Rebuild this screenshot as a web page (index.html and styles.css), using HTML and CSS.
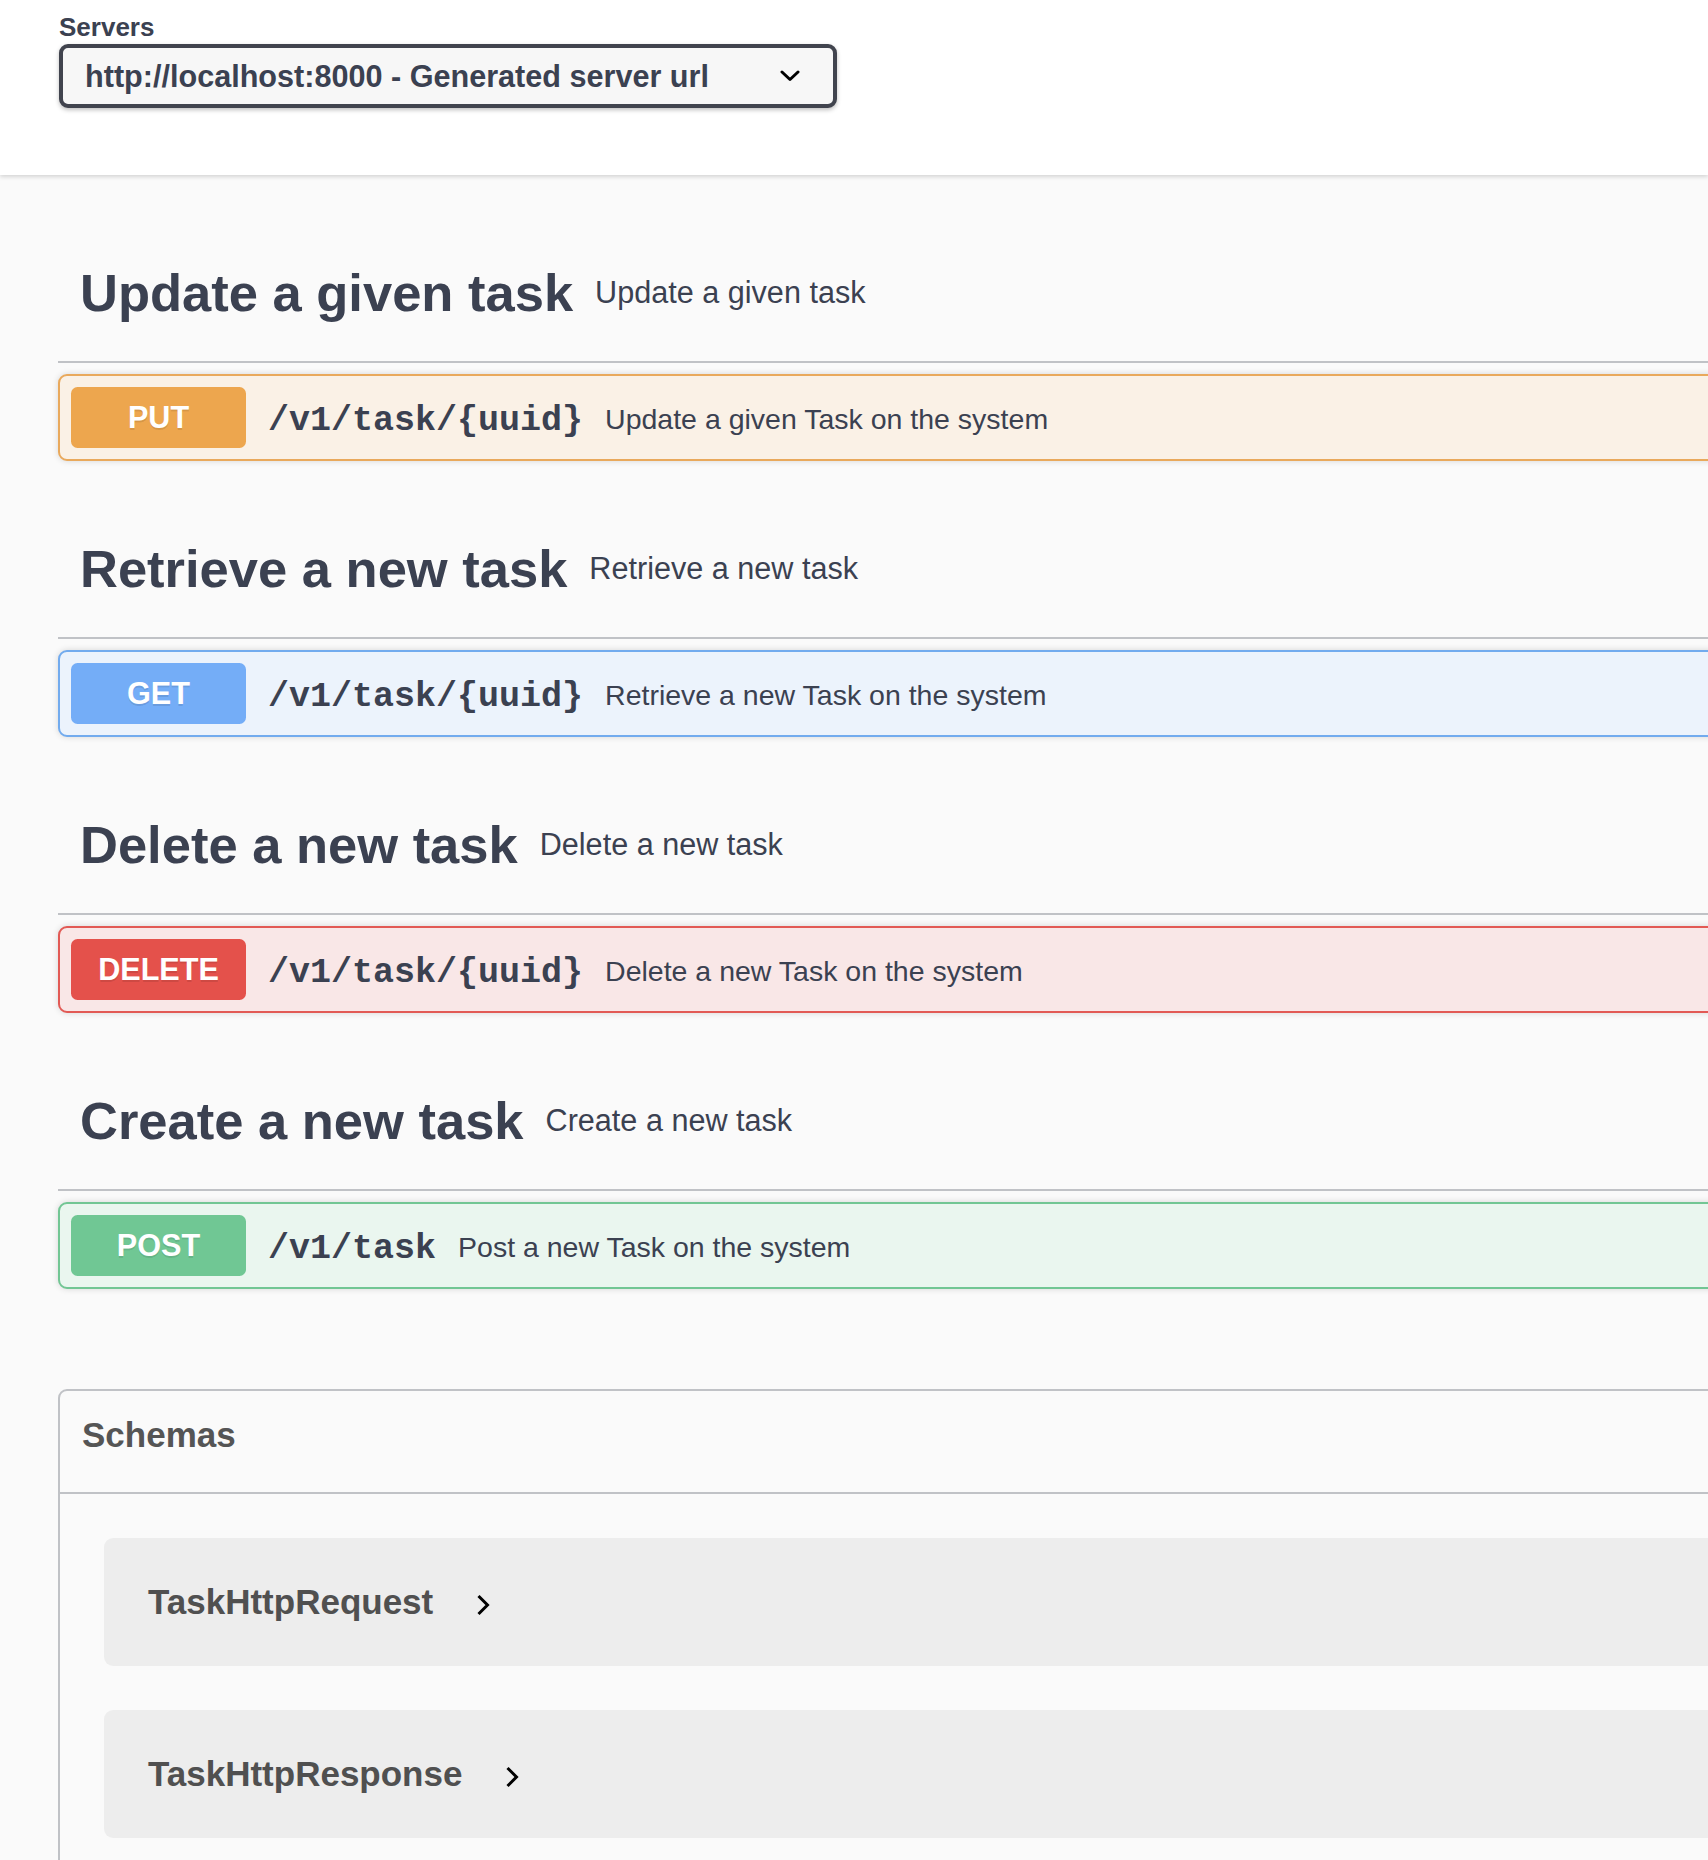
FILE: index.html
```html
<!DOCTYPE html>
<html lang="en">
<head>
<meta charset="utf-8">
<title>Swagger UI</title>
<link rel="stylesheet" href="styles.css">
</head>
<body>
<div class="page">
  <div class="scheme-container">
    <div class="servers">
      <label class="servers-label">Servers</label>
      <div class="select">
        <span class="select-text">http://localhost:8000 - Generated server url</span>
        <svg class="select-arrow" width="20" height="12" viewBox="0 0 20 12"><path d="M2 2 L10 9.5 L18 2" fill="none" stroke="#000" stroke-width="3" stroke-linecap="round" stroke-linejoin="round"/></svg>
      </div>
    </div>
  </div>

  <div class="main">
    <section class="tag-section">
      <h3 class="opblock-tag"><span class="tag-name">Update a given task</span><small class="tag-desc">Update a given task</small></h3>
      <div class="opblock put">
        <div class="summary">
          <span class="method">PUT</span>
          <span class="path">/v1/task/{uuid}</span>
          <span class="desc">Update a given Task on the system</span>
        </div>
      </div>
    </section>

    <section class="tag-section">
      <h3 class="opblock-tag"><span class="tag-name">Retrieve a new task</span><small class="tag-desc">Retrieve a new task</small></h3>
      <div class="opblock get">
        <div class="summary">
          <span class="method">GET</span>
          <span class="path">/v1/task/{uuid}</span>
          <span class="desc">Retrieve a new Task on the system</span>
        </div>
      </div>
    </section>

    <section class="tag-section">
      <h3 class="opblock-tag"><span class="tag-name">Delete a new task</span><small class="tag-desc">Delete a new task</small></h3>
      <div class="opblock delete">
        <div class="summary">
          <span class="method">DELETE</span>
          <span class="path">/v1/task/{uuid}</span>
          <span class="desc">Delete a new Task on the system</span>
        </div>
      </div>
    </section>

    <section class="tag-section">
      <h3 class="opblock-tag"><span class="tag-name">Create a new task</span><small class="tag-desc">Create a new task</small></h3>
      <div class="opblock post">
        <div class="summary">
          <span class="method">POST</span>
          <span class="path">/v1/task</span>
          <span class="desc">Post a new Task on the system</span>
        </div>
      </div>
    </section>

    <section class="models">
      <h4 class="models-title">Schemas</h4>
      <div class="model-container">
        <span class="model-title">TaskHttpRequest</span>
        <svg class="model-toggle" width="16" height="24" viewBox="0 0 16 24"><path d="M3.5 3 L12.5 12 L3.5 21" fill="none" stroke="#000" stroke-width="3"/></svg>
      </div>
      <div class="model-container">
        <span class="model-title">TaskHttpResponse</span>
        <svg class="model-toggle" width="16" height="24" viewBox="0 0 16 24"><path d="M3.5 3 L12.5 12 L3.5 21" fill="none" stroke="#000" stroke-width="3"/></svg>
      </div>
    </section>
  </div>
</div>
</body>
</html>
```

FILE: styles.css
```css
html, body {
  margin: 0;
  padding: 0;
  background: #fafafa;
  overflow: hidden;
}

body {
  font-family: "Liberation Sans", Arial, Helvetica, sans-serif;
  color: #3b4151;
}

.page {
  width: 100%;
  height: 1860px;
  overflow: hidden;
}

/* ---------- servers header ---------- */
.scheme-container {
  background: #ffffff;
  box-shadow: 0 2px 4px 0 rgba(0, 0, 0, 0.15);
  padding: 12px 0 67px 59px;
  position: relative;
  z-index: 1;
}

.servers-label {
  display: block;
  font-size: 26px;
  font-weight: 700;
  line-height: 30px;
  margin-bottom: 2px;
  color: #3b4151;
}

.select {
  box-sizing: border-box;
  width: 778px;
  height: 64px;
  border: 4px solid #41444e;
  border-radius: 9px;
  background: #f7f7f7;
  box-shadow: 0 2px 4px 0 rgba(0, 0, 0, 0.25);
  display: flex;
  align-items: center;
  justify-content: space-between;
  padding: 0 33px 0 22px;
}

.select-text {
  font-size: 30.6px;
  font-weight: 700;
  color: #3b4151;
  white-space: nowrap;
}

.select-arrow {
  display: block;
}

/* ---------- operations ---------- */
.main {
  width: 2400px;
  padding: 44px 0 0 58px;
}

.tag-section {
  display: flex;
  flex-direction: column;
}

.opblock-tag {
  box-sizing: border-box;
  height: 144px;
  margin: 0 0 11px;
  padding: 4px 44px 0 22px;
  display: flex;
  align-items: center;
  border-bottom: 2px solid rgba(59, 65, 81, 0.3);
  font-size: 52.5px;
  font-weight: 700;
  color: #3b4151;
  white-space: nowrap;
}

.tag-desc {
  font-size: 30.6px;
  font-weight: 400;
  padding: 0 22px;
  flex: 1;
}

.opblock {
  border: 2px solid #000;
  border-radius: 9px;
  box-shadow: 0 0 6px rgba(0, 0, 0, 0.15);
  margin: 0 0 34px;
}

.summary {
  display: flex;
  align-items: center;
  padding: 11px;
}

.method {
  box-sizing: border-box;
  width: 175px;
  height: 61px;
  display: flex;
  align-items: center;
  justify-content: center;
  border-radius: 6.5px;
  font-size: 30.6px;
  font-weight: 700;
  color: #ffffff;
  text-shadow: 0 2px 0 rgba(0, 0, 0, 0.1);
}

.path {
  font-family: "Liberation Mono", "Courier New", monospace;
  font-size: 35px;
  font-weight: 700;
  padding: 7px 22px 0 22px;
  color: #3b4151;
  white-space: nowrap;
}

.desc {
  font-size: 28.5px;
  color: #3b4151;
  white-space: nowrap;
  padding-top: 3px;
}

.opblock.put { background: #faf1e6; border-color: #e9a95c; }
.opblock.put .method { background: #eda64e; }

.opblock.get { background: #ecf3fc; border-color: #72abee; }
.opblock.get .method { background: #74adf7; }

.opblock.delete { background: #f9e7e7; border-color: #e25a55; }
.opblock.delete .method { background: #e4514b; }

.opblock.post { background: #eaf6ef; border-color: #72c694; }
.opblock.post .method { background: #70c794; }

/* ---------- schemas ---------- */
.models {
  margin-top: 66px;
  border: 2px solid rgba(59, 65, 81, 0.3);
  border-radius: 9px;
  padding-bottom: 44px;
}

.models-title {
  margin: 0;
  padding: 24px 44px 37px 22px;
  font-size: 35px;
  font-weight: 700;
  line-height: 40px;
  color: #555555;
  border-bottom: 2px solid rgba(59, 65, 81, 0.3);
}

.model-container {
  box-sizing: border-box;
  height: 128px;
  margin: 44px 44px 0 44px;
  padding-left: 44px;
  background: rgba(0, 0, 0, 0.05);
  border-radius: 9px;
  display: flex;
  align-items: center;
}

.model-title {
  font-size: 35px;
  font-weight: 700;
  color: #505050;
  white-space: nowrap;
}

.model-toggle {
  display: block;
  margin: 6px 0 0 42px;
}
```
